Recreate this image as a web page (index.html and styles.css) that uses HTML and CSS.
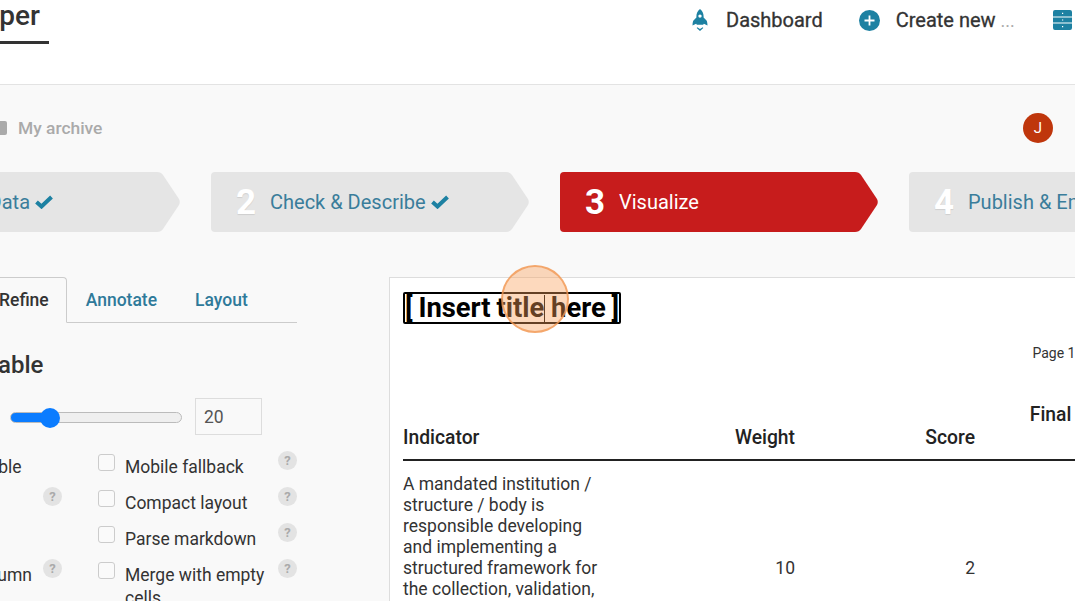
FILE: index.html
```html
<!DOCTYPE html>
<html lang="en">
<head>
    <meta charset="UTF-8">
    <meta name="viewport" content="width=device-width, initial-scale=1.0">
    <title>Datawrapper - Visualize</title>
    <link rel="stylesheet" href="styles.css">
</head>
<body>
    <div class="page">
        <header class="topbar">
            <div class="brand"><span class="brand-name">Datawrapper</span></div>
            <nav class="nav">
                <a class="nav-item">
                    <svg class="nav-icon rocket" viewBox="0 0 16 22"><path d="M8 0c2.400 1.700 3.600 4.400 3.600 7.200v1.300l2.900 3.100c.5.500.9 2.200 1 4.900l-3.600-1.700-.8 1H4.900l-.8-1-3.600 1.700c.1-2.700.5-4.400 1-4.900l2.900-3.100V7.200C4.400 4.400 5.600 1.700 8 0zm0 5.400a1.700 1.700 0 1 0 0 3.400 1.700 1.700 0 0 0 0-3.400zM5.300 18.200 8 19.900l2.700-1.700.6.800L8 22l-3.300-3z"/></svg>
                    Dashboard
                </a>
                <a class="nav-item">
                    <svg class="nav-icon plus" viewBox="0 0 21 21"><circle cx="10.500" cy="10.500" r="10.500"/><path d="M10.500 5.500v10M5.500 10.500h10" stroke="#fff" stroke-width="1.800"/></svg>
                    <span>Create new <span class="dots">...</span></span>
                </a>
                <a class="nav-item">
                    <svg class="nav-icon drawer" viewBox="0 0 19 20"><path d="M2 0h15a2 2 0 0 1 2 2v4.600H0V2a2 2 0 0 1 2-2zM0 7.500h19v5H0zM0 13.400h19V18a2 2 0 0 1-2 2H2a2 2 0 0 1-2-2z"/><path d="M9 2.800h1.200V4H9zM9 9.400h1.200v1.200H9zM9 16h1.200v1.200H9z" fill="#fff"/></svg>
                    My archive
                </a>
            </nav>
        </header>

        <main class="content">
            <div class="crumbs">
                <span class="folder"></span>
                <span class="crumb-text">My archive</span>
                <span class="avatar">J</span>
            </div>

            <div class="steps">
                <div class="step"><span class="step-num">1</span><span class="step-label">Upload Data <svg class="check" viewBox="0 0 18 14"><path d="M1.500 7 6.500 11.500 16.500 2" /></svg></span></div>
                <div class="step"><span class="step-num">2</span><span class="step-label">Check &amp; Describe <svg class="check" viewBox="0 0 18 14"><path d="M1.500 7 6.500 11.500 16.500 2" /></svg></span></div>
                <div class="step active"><span class="step-num">3</span><span class="step-label">Visualize</span></div>
                <div class="step"><span class="step-num">4</span><span class="step-label">Publish &amp; Embed</span></div>
            </div>

            <div class="workspace">
                <aside class="sidebar">
                    <div class="tabs">
                        <a class="tab current">Refine</a>
                        <a class="tab">Annotate</a>
                        <a class="tab">Layout</a>
                    </div>
                    <h3 class="panel-title">Table</h3>
                    <div class="slider-row">
                        <input class="slider" type="range" min="0" max="100" value="19">
                        <input class="num-input" type="text" value="20">
                    </div>
                    <div class="options">
                        <div class="opt-col left">
                            <div class="opt"><span>Searchable</span></div>
                            <div class="opt"><span>Striped</span><i class="help">?</i></div>
                            <div class="opt"><span>Sticky</span></div>
                            <div class="opt"><span>First column</span><i class="help">?</i></div>
                        </div>
                        <div class="opt-col right">
                            <label class="opt"><input type="checkbox"><span>Mobile fallback</span><i class="help">?</i></label>
                            <label class="opt"><input type="checkbox"><span>Compact layout</span><i class="help">?</i></label>
                            <label class="opt"><input type="checkbox"><span>Parse markdown</span><i class="help">?</i></label>
                            <label class="opt"><input type="checkbox"><span>Merge with empty cells</span><i class="help">?</i></label>
                        </div>
                    </div>
                </aside>

                <section class="preview">
                    <h1 class="chart-title">[ Insert title<span class="caret"></span> here ]</h1>
                    <div class="pager">Page 1 of 12</div>
                    <table class="data">
                        <thead>
                            <tr>
                                <th class="col-name">Indicator</th>
                                <th class="col-weight">Weight</th>
                                <th class="col-score">Score</th>
                                <th class="col-final">Final weighted score</th>
                            </tr>
                        </thead>
                        <tbody>
                            <tr>
                                <td>A mandated institution / structure / body is responsible developing and implementing a structured framework for the collection, validation, analysis and use of national data on the topic in the country</td>
                                <td class="num">10</td>
                                <td class="num">2</td>
                                <td class="num">20</td>
                            </tr>
                        </tbody>
                    </table>
                </section>
            </div>
        </main>

        <div class="click-mark"></div>
    </div>
</body>
</html>
```

FILE: styles.css
```css
* {
    box-sizing: border-box;
}
html, body {
    margin: 0;
    height: 100%;
    overflow: hidden;
}
body {
    font-family: Roboto, "Liberation Sans", sans-serif;
    background-color: #f9f9f9;
    color: #333;
}
.page {
    position: relative;
    width: 1075px;
    height: 601px;
    overflow: hidden;
}

/* top bar */
.topbar {
    display: flex;
    height: 85px;
    background-color: #fff;
    border-bottom: 1px solid #e3e3e3;
}
.brand {
    display: flex;
    justify-content: flex-end;
    width: 49px;
    height: 44px;
    padding-right: 9px;
    border-bottom: 3px solid #333;
    overflow: hidden;
}
.brand-name {
    flex-shrink: 0;
    font-size: 28px;
    font-weight: 500;
    line-height: 31px;
}
.nav {
    display: flex;
    flex-shrink: 0;
    gap: 36px;
    width: 383px;
    height: 40px;
    margin-left: auto;
    overflow: hidden;
}
.nav-item {
    display: flex;
    flex-shrink: 0;
    align-items: center;
    font-size: 20px;
    font-weight: 400;
    -webkit-text-stroke: 0.3px #333;
    white-space: nowrap;
}
.nav-icon {
    fill: #1d81a2;
    flex-shrink: 0;
}
.rocket {
    width: 16px;
    height: 22px;
    margin-right: 18px;
}
.plus {
    width: 21px;
    height: 21px;
    margin-right: 16px;
}
.drawer {
    width: 19px;
    height: 20px;
    margin-left: 2px;
    margin-right: 16px;
}
.dots {
    color: #aaa;
    font-size: 18px;
    -webkit-text-stroke: 0;
}

/* breadcrumb */
.crumbs {
    display: flex;
    align-items: center;
    height: 30px;
    margin-top: 28px;
    padding-right: 22px;
}
.folder {
    width: 18px;
    height: 14px;
    margin-left: -11px;
    margin-right: 11px;
    background-color: #aaa;
    border-radius: 2px;
}
.crumb-text {
    margin-top: -1px;
    color: #aaa;
    font-size: 17.400px;
    font-weight: 500;
}
.avatar {
    display: flex;
    align-items: center;
    justify-content: center;
    width: 30px;
    height: 30px;
    margin-left: auto;
    border-radius: 50%;
    background-color: #bf360c;
    color: #fff;
    font-size: 15px;
}

/* steps */
.steps {
    display: flex;
    gap: 31px;
    margin-top: 29px;
    margin-left: -138px;
}
.step {
    display: flex;
    flex-shrink: 0;
    align-items: center;
    width: 318px;
    height: 60px;
    padding-left: 25px;
    background-color: #e5e5e5;
    clip-path: path("M4 0H295Q299 0 301 3L317 27Q318.500 30 317 33L301 57Q299 60 295 60H4Q0 60 0 56V4Q0 0 4 0Z");
}
.step-num {
    width: 34px;
    color: #fff;
    font-size: 35px;
    font-weight: 700;
    line-height: 1;
    text-shadow: 0 1px 1px rgba(0, 0, 0, 0.1);
}
.step-label {
    color: #3a7d9b;
    font-size: 20px;
    white-space: nowrap;
}
.step.active {
    background-color: #c71c1c;
}
.step.active .step-label {
    color: #fff;
}
.check {
    width: 18px;
    height: 14px;
    fill: none;
    stroke: #1d81a2;
    stroke-width: 4;
}

/* left column */
.workspace {
    display: flex;
    margin-top: 45px;
}
.sidebar {
    flex-shrink: 0;
    width: 357px;
    margin-left: -60px;
}
.tabs {
    display: flex;
    height: 46px;
    margin-left: 40px;
    border-bottom: 1px solid #ccc;
}
.tab {
    height: 45px;
    padding: 0 18px;
    border: 1px solid transparent;
    color: #2f7a9a;
    font-size: 17.500px;
    font-weight: 500;
    line-height: 44px;
}
.tab.current {
    height: 46px;
    padding-right: 17px;
    color: #333;
    background-color: #f9f9f9;
    border-color: #ccc;
    border-bottom-color: #f9f9f9;
    border-radius: 4px 4px 0 0;
}
.panel-title {
    margin: 28px 0 0 45px;
    font-size: 24px;
    font-weight: 500;
    line-height: 28px;
}
.slider-row {
    display: flex;
    align-items: center;
    gap: 13px;
    margin-top: 19px;
    margin-left: 70px;
}
.slider {
    -webkit-appearance: none;
    appearance: none;
    position: relative;
    top: 1px;
    width: 172px;
    height: 20px;
    margin: 0;
    background: transparent;
}
.slider::-webkit-slider-runnable-track {
    height: 11px;
    border: 1px solid #bbb;
    border-radius: 6px;
    background: linear-gradient(to right, #0b7cff 38px, #efefef 38px);
}
.slider::-webkit-slider-thumb {
    -webkit-appearance: none;
    width: 20px;
    height: 20px;
    margin-top: -5.500px;
    border-radius: 50%;
    background-color: #0b7cff;
}
.num-input {
    width: 67px;
    height: 37px;
    padding: 0 8px;
    border: 1px solid #ddd;
    background-color: #f9f9f9;
    color: #555;
    font-family: inherit;
    font-size: 17.500px;
}
.options {
    display: flex;
    margin-top: 18px;
}
.opt-col.left {
    width: 158px;
}
.opt-col.left span {
    margin-left: -5px;
}
.opt-col.right {
    width: 199px;
}
.opt {
    position: relative;
    display: flex;
    height: 36px;
    font-size: 17.500px;
    line-height: 23px;
    padding-top: 3px;
}
.opt input {
    -webkit-appearance: none;
    appearance: none;
    flex-shrink: 0;
    width: 17px;
    height: 17px;
    margin: -2px 10px 0 0;
    border: 1px solid #ccc;
    border-radius: 3px;
    background-color: #fafafa;
}
.opt-col.right .opt span {
    width: 152px;
}
.help {
    position: absolute;
    top: -2px;
    left: 180px;
    width: 19px;
    height: 19px;
    border-radius: 50%;
    background-color: #e3e3e3;
    color: #aaa;
    font-size: 13px;
    font-style: normal;
    font-weight: 700;
    line-height: 19px;
    text-align: center;
}
.opt-col.left .help {
    left: 103px;
}

/* chart preview */
.preview {
    flex-shrink: 0;
    width: 790px;
    height: 400px;
    margin-left: 92px;
    padding: 14px 13px 0;
    background-color: #fff;
    border: 1px solid #ddd;
}
.chart-title {
    display: inline-block;
    width: 218px;
    margin: 0;
    border: 2px solid #000;
    border-radius: 2px;
    color: #000;
    font-size: 27.400px;
    font-weight: 700;
    line-height: 28px;
    text-align: center;
    white-space: nowrap;
    word-spacing: -1px;
}
.caret {
    display: inline-block;
    width: 0;
    height: 28px;
    margin-bottom: -6px;
    border-left: 1px solid #000;
}
.pager {
    margin-top: 21px;
    padding-right: 54px;
    color: #333;
    font-size: 14px;
    line-height: 16px;
    text-align: right;
}
.data {
    width: 752px;
    margin-top: 42px;
    border-collapse: collapse;
    table-layout: fixed;
    font-size: 17.500px;
}
.data th {
    padding: 0 0 10px;
    border-bottom: 2px solid #222;
    color: #222;
    font-size: 19.300px;
    font-weight: 500;
    line-height: 23px;
    text-align: right;
    vertical-align: bottom;
}
.data th.col-name {
    text-align: left;
}
.data th.col-final {
    padding-left: 45px;
}
.col-name {
    width: 200px;
}
.col-weight {
    width: 192px;
}
.col-score {
    width: 180px;
}
.data td {
    padding: 13px 0;
    line-height: 21px;
    vertical-align: middle;
}
.data td.num {
    text-align: right;
}

/* click highlight from the recording */
.click-mark {
    position: absolute;
    left: 501px;
    top: 265px;
    width: 68px;
    height: 68px;
    border: 2px solid rgba(240, 150, 80, 0.75);
    border-radius: 50%;
    background-color: rgba(250, 160, 90, 0.4);
}
```
